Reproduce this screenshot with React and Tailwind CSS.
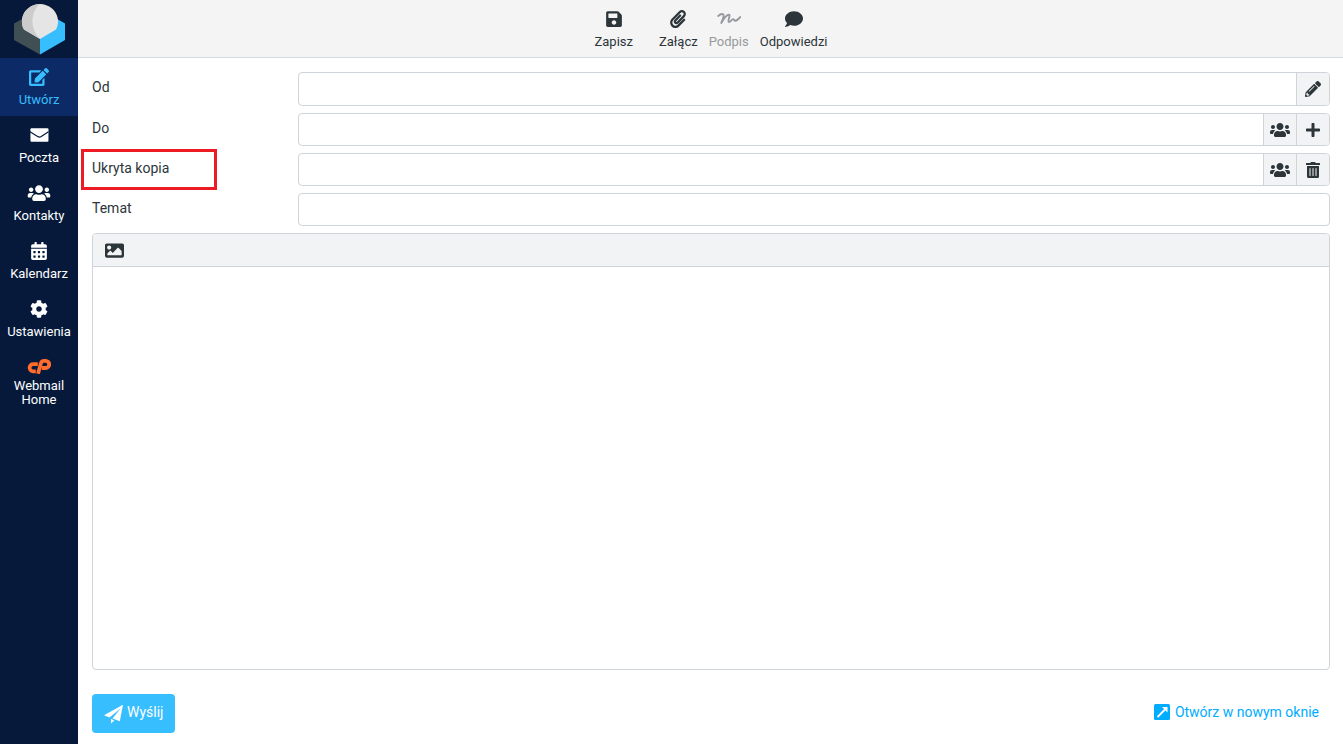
import { useState } from "react";
import {
  FaEdit,
  FaUsers,
  FaCalendarAlt,
  FaCog,
  FaSave,
  FaPaperclip,
  FaComment,
  FaPencilAlt,
  FaPlus,
  FaTrashAlt,
  FaImage,
} from "react-icons/fa";

const Logo = () => (
  <svg viewBox="0 0 52 52" className="h-[52px] w-[52px]" aria-hidden="true">
    <path d="M0 20.500 26 6v45.500L0 37Z" fill="#404f54" />
    <path d="M51 20.500 26 6v45.500L51 37Z" fill="#37beff" />
    <path d="M26 36 10 26.500C6 20 8 10 14 5.500 21-.5 31-.5 38 5.500c6 5 8 14 4 21Z" fill="#e5e5e5" />
    <path d="M26 36 10 26.500C6 20 8 10 14 5.500 18 2 22 1 26 1c-9 7-11 24 0 35Z" fill="#ccc" />
  </svg>
);

const MailIcon = ({ className }) => (
  <svg viewBox="0 0 20 20" className={className} aria-hidden="true">
    <rect x="0.500" y="2.500" width="20" height="15" rx="1.200" fill="currentColor" />
    <path d="M0 6.500 8.500 11.700q2 1.200 4 0L20.500 6.500" fill="none" stroke="#06193b" strokeWidth="1.300" />
  </svg>
);

const SignatureIcon = ({ className }) => (
  <svg viewBox="0 0 24 18" className={className} aria-hidden="true">
    <path
      d="M1.200 6C4 3.600 6.800 3.200 6.600 6 6.300 9 4.800 11 4.300 13 6.800 8.500 9.500 5 11.700 4.600c2.500-.2-1.500 6.600.1 7.400 1.600.7 2.900-3.200 4.500-2.900 1.200.3.700 1.900 2.200 1.700 1.700-.3 3-2.300 5-3.800"
      fill="none"
      stroke="currentColor"
      strokeWidth="1.900"
      strokeLinecap="round"
      strokeLinejoin="round"
    />
  </svg>
);

const WebmailLogo = () => (
  <svg viewBox="0 0 24 16" className="h-4 w-6" aria-hidden="true">
    <g fill="none" stroke="#ff6c2c" strokeWidth="3.800">
      <path d="M10.800 6.200H6.500a3.600 3.600 0 0 0-.6 7.200H8.800" />
      <path d="M11 15.800 13.800 5.400Q14.500 2.800 17 2.800h1.600a3.500 3.500 0 0 1 0 7.200h-3.800" />
    </g>
  </svg>
);

const PlaneIcon = () => (
  <svg viewBox="0 0 20 20" className="h-5 w-5" fill="currentColor" aria-hidden="true">
    <path d="M19 .8 0 11.300 5.500 13.500 16.500 4.500 8.500 14.500 15.800 17.200Z" />
    <path d="M7 15.100V19.500l3.300-3.100Z" />
  </svg>
);

const OpenWindowIcon = () => (
  <svg viewBox="0 0 16 16" className="h-4 w-4" aria-hidden="true">
    <rect width="16" height="16" rx="1.500" fill="#00acff" />
    <path d="M3.500 13 11 5.500" stroke="#fff" strokeWidth="1.800" fill="none" />
    <path d="M8 3h5.500v5.500Z" fill="#fff" />
  </svg>
);

const menuItems = [
  { label: "Utwórz", icon: FaEdit, size: "w-5", active: true },
  { label: "Poczta", icon: MailIcon, size: "w-5" },
  { label: "Kontakty", icon: FaUsers, size: "w-6" },
  { label: "Kalendarz", icon: FaCalendarAlt, size: "w-5" },
  { label: "Ustawienia", icon: FaCog, size: "w-5" },
];

const Sidebar = () => (
  <nav className="w-[78px] shrink-0 bg-[#06193b] text-[13px] text-white">
    <div className="flex h-[58px] justify-center pl-px pt-[3px]">
      <Logo />
    </div>
    {menuItems.map(({ label, icon: Icon, size, active }) => (
      <a
        key={label}
        href="#"
        className={`flex h-[58px] flex-col items-center gap-1.5 pt-[10px] leading-4 ${
          active ? "bg-[#0c2a65] text-[#37beff]" : ""
        }`}
      >
        <Icon className={`h-[18px] ${size}`} />
        <span>{label}</span>
      </a>
    ))}
    <a href="#" className="flex flex-col items-center gap-[5px] pt-[10px] text-center leading-[14px]">
      <WebmailLogo />
      <span>
        Webmail
        <br />
        Home
      </span>
    </a>
  </nav>
);

const ToolbarButton = ({ icon: Icon, label, disabled }) => (
  <button
    type="button"
    disabled={disabled}
    className="flex flex-col items-center gap-1.5 leading-4 disabled:text-[#969a9e]"
  >
    <Icon className="h-[18px] w-6" />
    <span>{label}</span>
  </button>
);

const FieldButton = ({ icon: Icon, label, size = "h-4 w-4" }) => (
  <button
    type="button"
    aria-label={label}
    className="flex w-[33px] shrink-0 items-center justify-center border-l border-[#ced4da] bg-[#f1f3f4]"
  >
    <Icon className={size} />
  </button>
);

const Field = ({ id, label, tall, marked, children }) => {
  const [value, setValue] = useState("");

  return (
    <div className={`relative mb-[7px] flex ${tall ? "h-[34px]" : "h-[33px]"}`}>
      <label htmlFor={id} className="w-1/6 shrink-0 leading-[30px]">
        {label}
      </label>
      <div className="flex min-w-0 flex-1 overflow-hidden rounded border border-[#ced4da]">
        <input
          id={id}
          type="text"
          value={value}
          onChange={(e) => setValue(e.target.value)}
          className="min-w-0 flex-1 px-2 outline-none"
        />
        {children}
      </div>
      {/* Highlight frame around the label */}
      {marked && (
        <div className="pointer-events-none absolute -left-[11px] -top-1 h-[41px] w-[136px] border-3 border-[#ed1c24]" />
      )}
    </div>
  );
};

const App = () => {
  return (
    <div className="flex min-h-screen bg-white font-['Roboto',sans-serif] text-sm text-[#2c363a]">
      <Sidebar />

      <div className="flex min-w-0 flex-1 flex-col">
        {/* Toolbar */}
        <header className="flex h-[58px] shrink-0 justify-center border-b border-[#d4dbde] bg-[#f4f4f4] pl-px pt-[10px] text-[13px]">
          <div className="flex items-start gap-[11px]">
            <div className="flex gap-[26px]">
              <ToolbarButton icon={FaSave} label="Zapisz" />
              <ToolbarButton icon={FaPaperclip} label="Załącz" />
            </div>
            <ToolbarButton icon={SignatureIcon} label="Podpis" disabled />
            <ToolbarButton icon={FaComment} label="Odpowiedzi" />
          </div>
        </header>

        {/* Compose form */}
        <form
          className="flex flex-1 flex-col pl-[14px] pr-[13px] pt-[14px]"
          onSubmit={(e) => e.preventDefault()}
        >
          <Field id="from" label="Od" tall>
            <FieldButton icon={FaPencilAlt} label="Edytuj" />
          </Field>
          <Field id="to" label="Do">
            <FieldButton icon={FaUsers} label="Kontakty" size="h-4 w-5" />
            <FieldButton icon={FaPlus} label="Dodaj" />
          </Field>
          <Field id="bcc" label="Ukryta kopia" marked>
            <FieldButton icon={FaUsers} label="Kontakty" size="h-4 w-5" />
            <FieldButton icon={FaTrashAlt} label="Usuń" />
          </Field>
          <Field id="subject" label="Temat" />

          <div className="flex flex-1 flex-col overflow-hidden rounded border border-[#ced4da]">
            <div className="flex h-[33px] items-center border-b border-[#ced4da] bg-[#f1f3f4] px-3">
              <button type="button" aria-label="Obraz">
                <FaImage className="h-[19px] w-[19px]" />
              </button>
            </div>
            <textarea aria-label="Treść" className="w-full flex-1 resize-none p-2 outline-none" />
          </div>

          <div className="flex items-center justify-between pb-[11px] pt-6">
            <button
              type="submit"
              className="flex h-[39px] items-center gap-[3px] rounded-sm bg-[#37beff] px-3 text-white"
            >
              <PlaneIcon />
              <span className="pb-1">Wyślij</span>
            </button>
            <a href="#" className="flex items-center gap-[5px] pb-1 pr-[11px] text-[#00acff]">
              <OpenWindowIcon />
              Otwórz w nowym oknie
            </a>
          </div>
        </form>
      </div>
    </div>
  );
};

export default App;
